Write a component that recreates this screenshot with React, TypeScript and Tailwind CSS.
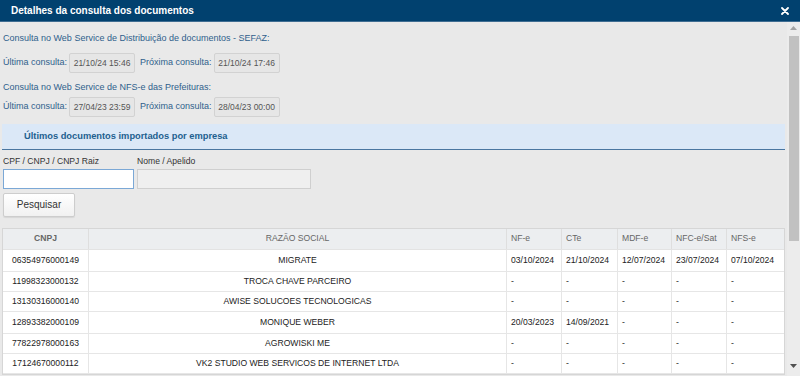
import React from 'react';

interface Row {
    cnpj: string;
    razao: string;
    datas: string[];
}

const rows: Row[] = [
    { cnpj: '06354976000149', razao: 'MIGRATE', datas: ['03/10/2024', '21/10/2024', '12/07/2024', '23/07/2024', '07/10/2024'] },
    { cnpj: '11998323000132', razao: 'TROCA CHAVE PARCEIRO', datas: ['-', '-', '-', '-', '-'] },
    { cnpj: '13130316000140', razao: 'AWISE SOLUCOES TECNOLOGICAS', datas: ['-', '-', '-', '-', '-'] },
    { cnpj: '12893382000109', razao: 'MONIQUE WEBER', datas: ['20/03/2023', '14/09/2021', '-', '-', '-'] },
    { cnpj: '77822978000163', razao: 'AGROWISKI ME', datas: ['-', '-', '-', '-', '-'] },
    { cnpj: '17124670000112', razao: 'VK2 STUDIO WEB SERVICOS DE INTERNET LTDA', datas: ['-', '-', '-', '-', '-'] },
];

const colunas = ['NF-e', 'CTe', 'MDF-e', 'NFC-e/Sat', 'NFS-e'];
const larguras = ['w-[55px]', 'w-[56px]', 'w-[54px]', 'w-[55px]', 'w-[57px]'];

const DateBox: React.FC<{ value: string }> = ({ value }) => (
    <span className="h-[20px] w-[66px] flex items-center justify-center bg-[#e6e6e6] border border-[#d2d2d2] rounded-[2px] text-[8.5px] text-[#555]">
        {value}
    </span>
);

const ConsultaLinha: React.FC<{ ultima: string; proxima: string }> = ({ ultima, proxima }) => (
    <div className="flex items-center h-[20px] pl-[1px] text-[9px] text-[#2f5f8c]">
        <span>Última consulta:</span>
        <span className="ml-[2px]"><DateBox value={ultima} /></span>
        <span className="ml-[5px]">Próxima consulta:</span>
        <span className="ml-[2px]"><DateBox value={proxima} /></span>
    </div>
);

export default function App() {
    return (
        <div className="w-[800px] h-[376px] overflow-hidden flex flex-col bg-[#e9e9e9] font-['Liberation_Sans',Arial,sans-serif]">
            <div className="h-[22px] shrink-0 bg-[#01416f] border-b border-[#3f6d92] flex items-center justify-between pl-[11px] pr-[11px]">
                <span className="text-white font-bold text-[10px]">Detalhes da consulta dos documentos</span>
                <svg width="8" height="8" viewBox="0 0 8 8">
                    <path d="M1 1 L7 7 M7 1 L1 7" stroke="white" strokeWidth="1.8" strokeLinecap="round" />
                </svg>
            </div>

            <div className="flex flex-1 min-h-0">
                <div className="flex-1 min-w-0 pl-[2px] pr-[2px] flex flex-col">
                    <div className="mt-[9px] leading-[14px] pl-[1px] text-[9px] text-[#2f5f8c]">
                        Consulta no Web Service de Distribuição de documentos - SEFAZ:
                    </div>
                    <div className="mt-[8px]">
                        <ConsultaLinha ultima="21/10/24 15:46" proxima="21/10/24 17:46" />
                    </div>
                    <div className="mt-[7px] leading-[14px] pl-[1px] text-[9px] text-[#2f5f8c]">
                        Consulta no Web Service de NFS-e das Prefeituras:
                    </div>
                    <div className="mt-[3px]">
                        <ConsultaLinha ultima="27/04/23 23:59" proxima="28/04/23 00:00" />
                    </div>

                    <div className="mt-[7px] h-[26px] shrink-0 bg-[#dbe8f7] border-b border-[#4a76a0] flex items-center pl-[22px]">
                        <span className="text-[9.3px] font-bold text-[#22608f]">Últimos documentos importados por empresa</span>
                    </div>

                    <div className="flex gap-[3px] pl-[1px] mt-[5px]">
                        <div className="flex flex-col w-[131px]">
                            <span className="leading-[12px] text-[8.6px] text-[#333]">CPF / CNPJ / CNPJ Raiz</span>
                            <input className="mt-[2px] h-[20px] w-full bg-white border border-[#7ba8d6] outline-none" />
                        </div>
                        <div className="flex flex-col w-[174px]">
                            <span className="leading-[12px] text-[8.6px] text-[#333]">Nome / Apelido</span>
                            <input className="mt-[2px] h-[20px] w-full bg-[#efefef] border border-[#cfcfcf] outline-none" />
                        </div>
                    </div>
                    <div className="pl-[1px] mt-[2px]">
                        <button className="h-[24px] w-[72px] bg-gradient-to-b from-white to-[#f1f1f1] border border-[#cdcdcd] rounded-[2px] text-[10px] text-[#333] shadow-[0_1px_1px_rgba(0,0,0,0.08)]">
                            Pesquisar
                        </button>
                    </div>

                    <div className="mt-[11px] border border-[#d6d6d6] bg-white text-[8.6px] text-[#222]">
                        <div className="flex h-[21px] bg-[#eceef0] text-[#666] border-b border-[#e3e3e3]">
                            <div className="w-[86px] flex items-center justify-center font-bold border-r border-[#dedede]">CNPJ</div>
                            <div className="flex-1 flex items-center justify-center border-r border-[#dedede]">RAZÃO SOCIAL</div>
                            {colunas.map((c, i) => (
                                <div key={c} className={`${larguras[i]} flex items-center pl-[4px] ${i < 4 ? 'border-r border-[#dedede]' : ''}`}>
                                    {c}
                                </div>
                            ))}
                        </div>
                        {rows.map((r) => {
                            const temData = r.datas[0] !== '-';
                            return (
                                <div key={r.cnpj} className={`flex border-b border-[#e6e6e6] ${temData ? 'h-[22px]' : 'h-[20px]'}`}>
                                    <div className="w-[86px] flex items-center justify-center border-r border-[#e6e6e6]">{r.cnpj}</div>
                                    <div className="flex-1 flex items-center justify-center border-r border-[#e6e6e6]">{r.razao}</div>
                                    {r.datas.map((d, i) => (
                                        <div key={i} className={`${larguras[i]} flex items-center pl-[4px] ${i < 4 ? 'border-r border-[#e6e6e6]' : ''}`}>
                                            {d}
                                        </div>
                                    ))}
                                </div>
                            );
                        })}
                    </div>
                </div>

                <div className="w-[13px] shrink-0 bg-[#ececec] flex flex-col items-center">
                    <svg className="mt-[4px]" width="7" height="4" viewBox="0 0 7 4">
                        <path d="M0 4 L3.5 0 L7 4 Z" fill="#a3a3a3" />
                    </svg>
                    <div className="mt-[6px] w-[10px] h-[205px] bg-[#c1c1c1]" />
                    <div className="flex-1" />
                    <svg className="mb-[8px]" width="7" height="4" viewBox="0 0 7 4">
                        <path d="M0 0 L7 0 L3.5 4 Z" fill="#505050" />
                    </svg>
                </div>
            </div>
        </div>
    );
}
